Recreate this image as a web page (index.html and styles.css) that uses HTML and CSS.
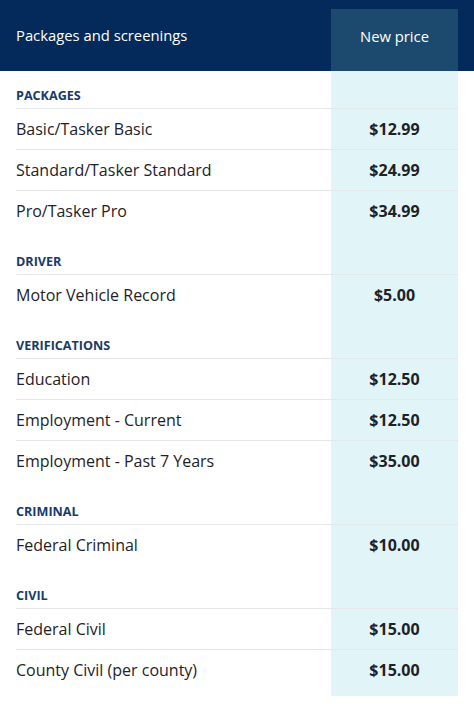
FILE: index.html
```html
<!DOCTYPE html>
<html lang="en">
<head>
<meta charset="utf-8">
<title>Packages and screenings</title>
<link rel="stylesheet" href="styles.css">
</head>
<body>
<div class="table">
  <div class="head">
    <div class="head-name">Packages and screenings</div>
    <div class="head-price">New price</div>
  </div>

  <div class="section">
    <div class="label-row"><span class="label">PACKAGES</span><span class="pc"></span></div>
    <div class="row"><span class="name">Basic/Tasker Basic</span><span class="pc price">$12.99</span></div>
    <div class="row"><span class="name">Standard/Tasker Standard</span><span class="pc price">$24.99</span></div>
    <div class="row"><span class="name">Pro/Tasker Pro</span><span class="pc price">$34.99</span></div>
    <div class="spacer"><span></span><span class="pc"></span></div>
  </div>

  <div class="section">
    <div class="label-row"><span class="label">DRIVER</span><span class="pc"></span></div>
    <div class="row"><span class="name">Motor Vehicle Record</span><span class="pc price">$5.00</span></div>
    <div class="spacer"><span></span><span class="pc"></span></div>
  </div>

  <div class="section">
    <div class="label-row"><span class="label">VERIFICATIONS</span><span class="pc"></span></div>
    <div class="row"><span class="name">Education</span><span class="pc price">$12.50</span></div>
    <div class="row"><span class="name">Employment - Current</span><span class="pc price">$12.50</span></div>
    <div class="row"><span class="name">Employment - Past 7 Years</span><span class="pc price">$35.00</span></div>
    <div class="spacer"><span></span><span class="pc"></span></div>
  </div>

  <div class="section">
    <div class="label-row"><span class="label">CRIMINAL</span><span class="pc"></span></div>
    <div class="row"><span class="name">Federal Criminal</span><span class="pc price">$10.00</span></div>
    <div class="spacer"><span></span><span class="pc"></span></div>
  </div>

  <div class="section">
    <div class="label-row"><span class="label">CIVIL</span><span class="pc"></span></div>
    <div class="row"><span class="name">Federal Civil</span><span class="pc price">$15.00</span></div>
    <div class="row"><span class="name">County Civil (per county)</span><span class="pc price">$15.00</span></div>
    <div class="spacer"><span></span><span class="pc"></span></div>
  </div>
</div>
</body>
</html>
```

FILE: styles.css
```css
* { box-sizing: border-box; }
html, body { margin: 0; padding: 0; background: #ffffff; }
body {
  font-family: "Open Sans", "Noto Sans", sans-serif;
  color: #1e2228;
  width: 474px;
}
.head {
  background: #032a5a;
  height: 71px;
  padding: 0 16px;
  display: grid;
  grid-template-columns: 1fr 127px;
}
.head-name {
  align-self: center;
  color: #ffffff;
  font-size: 14.8px;
  font-weight: 500;
  padding-bottom: 1px;
}
.head-price {
  margin-top: 9px;
  background: #1b4a6e;
  color: #ffffff;
  font-size: 14.8px;
  font-weight: 500;
  display: flex;
  align-items: center;
  justify-content: center;
  padding-bottom: 9px;
}
.section { padding: 0 16px; }
.label-row, .row, .spacer {
  display: grid;
  grid-template-columns: 1fr 127px;
}
.pc { background: #e1f5f8; }
.label-row { height: 37px; }
.label {
  align-self: end;
  padding-bottom: 4px;
  font-size: 12.6px;
  font-weight: 700;
  color: #163b6a;
}
.row {
  height: 41px;
  border-top: 1px solid #e4e8eb;
}
.name {
  display: flex;
  align-items: center;
  font-size: 16px;
  padding-bottom: 1px;
}
.price {
  display: flex;
  align-items: center;
  justify-content: center;
  font-size: 16px;
  font-weight: 700;
  padding-bottom: 1px;
}
.spacer { height: 6px; }
```
